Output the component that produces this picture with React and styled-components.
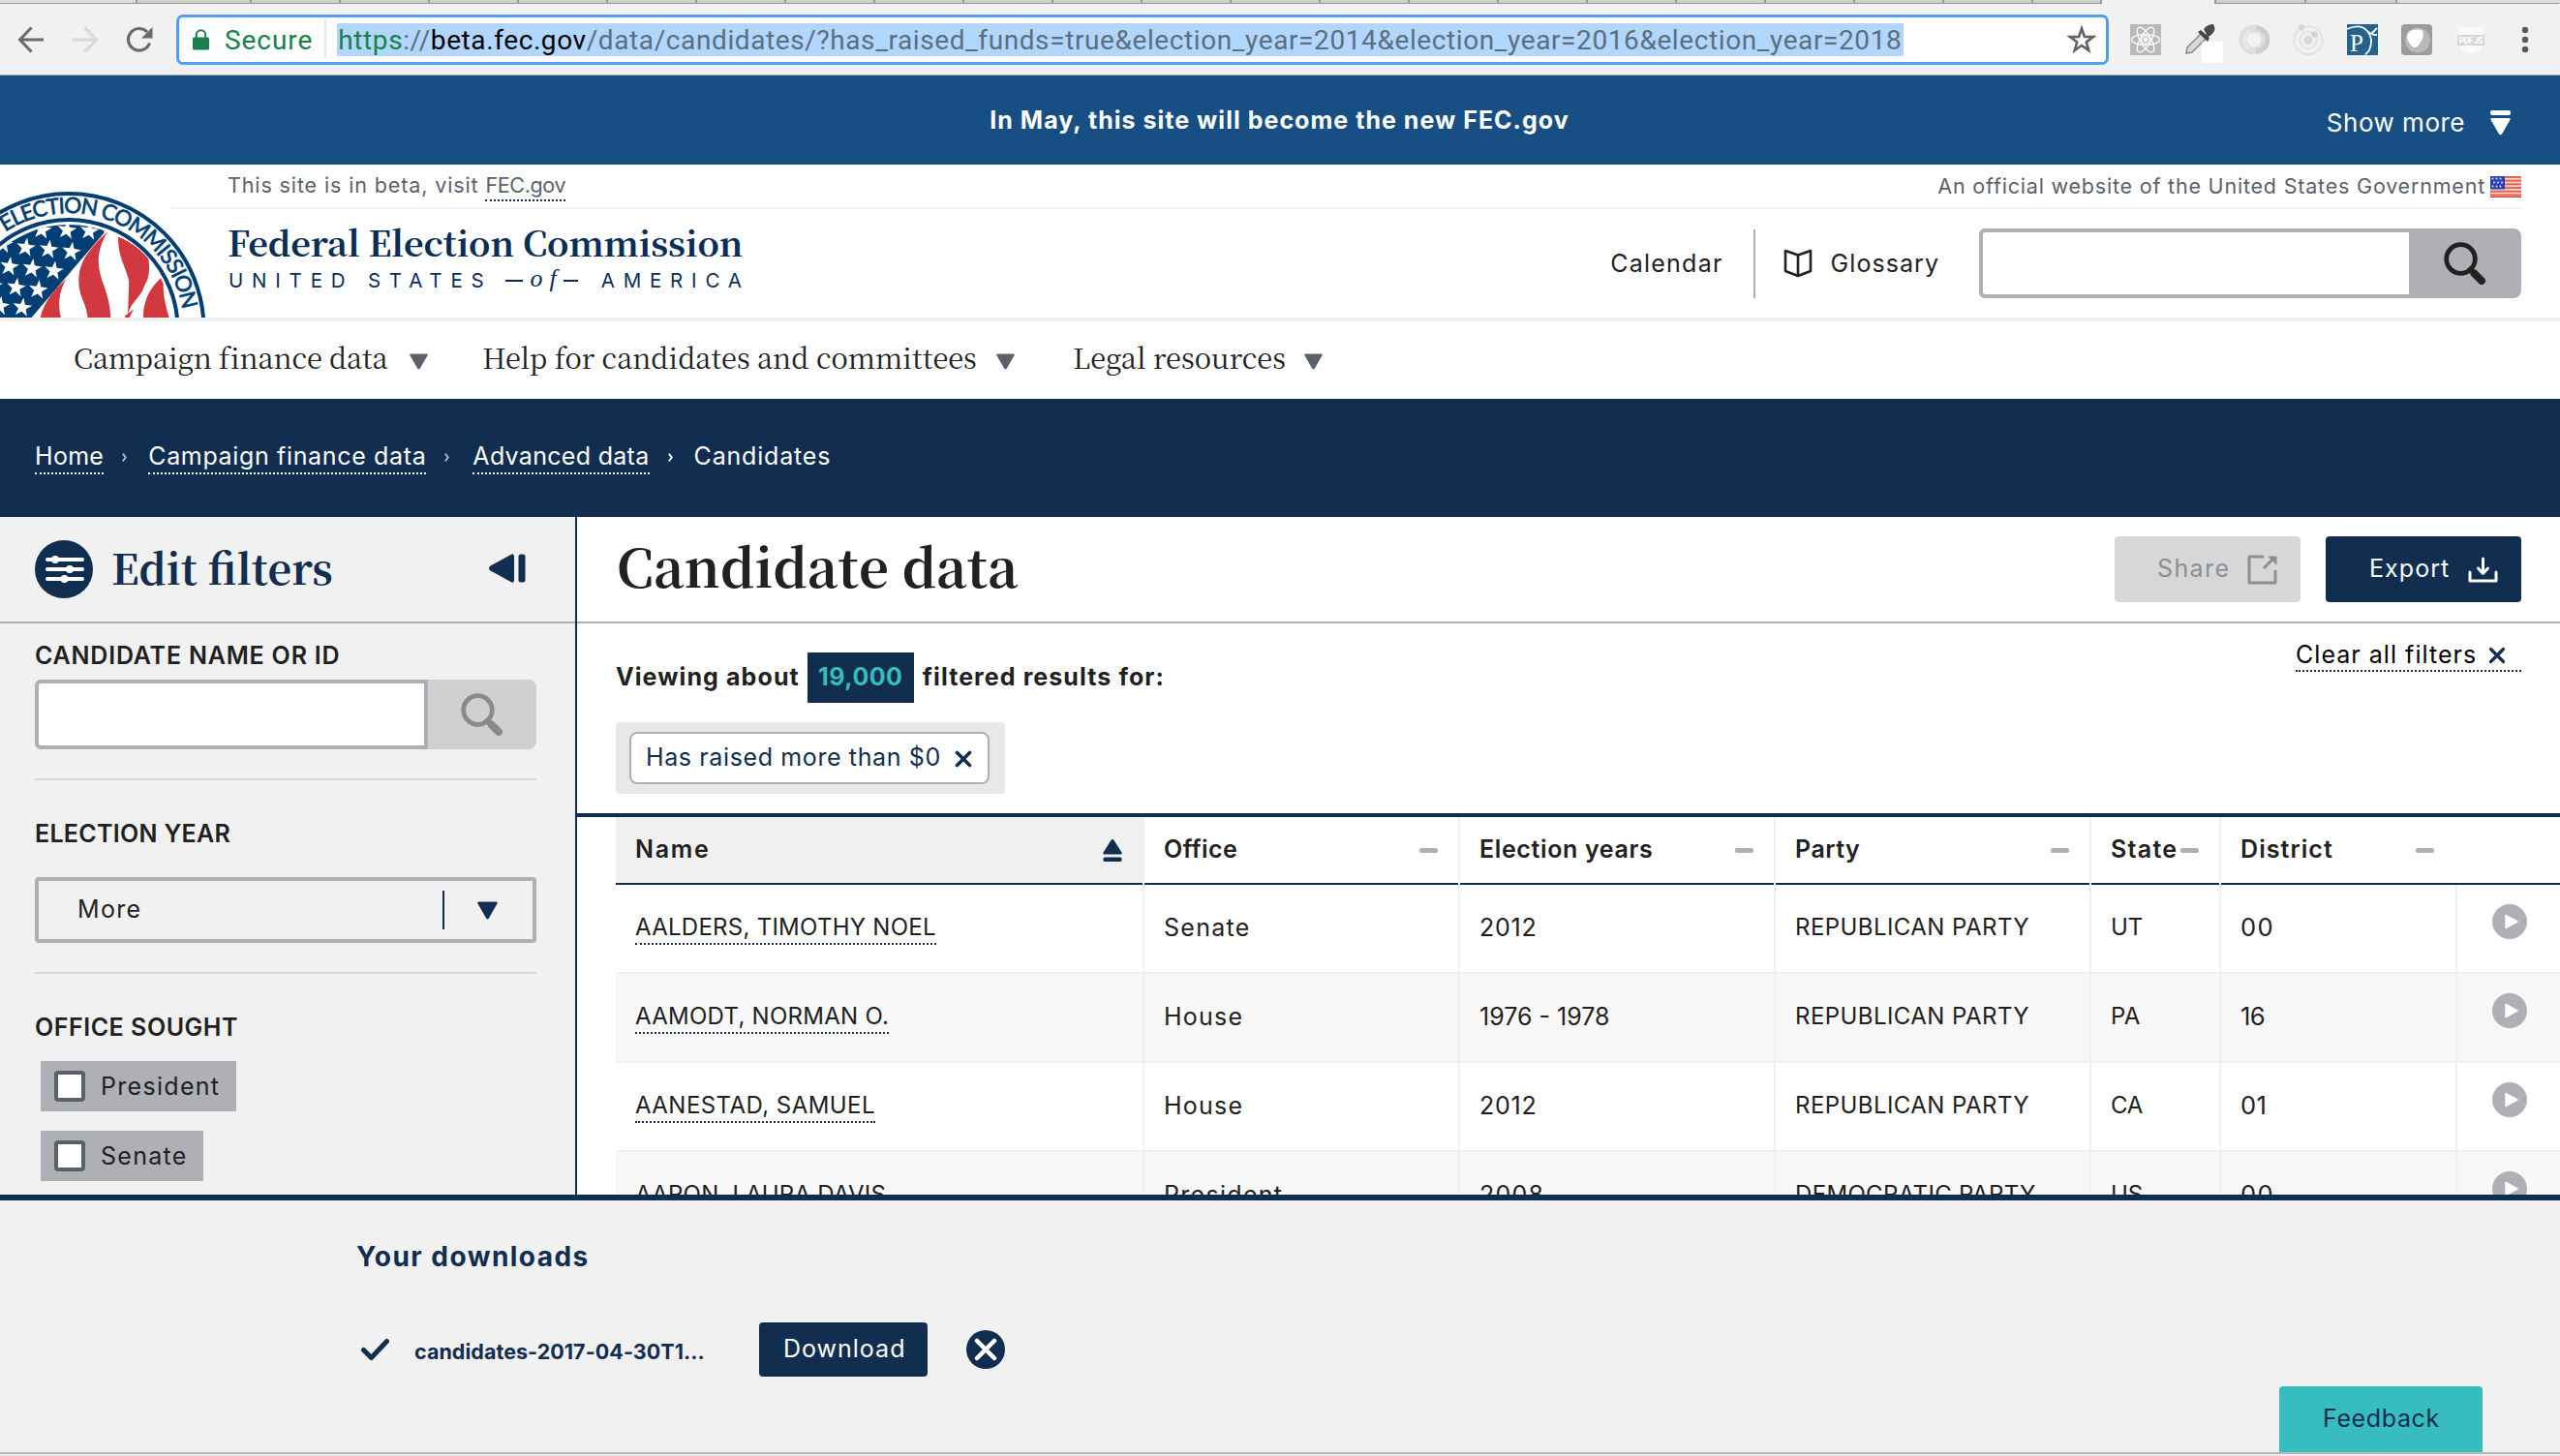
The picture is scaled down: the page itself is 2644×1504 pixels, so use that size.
import React from 'react';
import styled, { createGlobalStyle } from 'styled-components';

const sans = 'Inter, "Liberation Sans", sans-serif';
const serif = '"Noto Serif CJK SC", "Liberation Serif", serif';
const navy = '#112e51';
const ink = '#212121';
const gray = '#aeb0b5';
const pale = '#f1f1f1';

const GlobalStyle = createGlobalStyle`
  * { box-sizing: border-box; }
  body { margin: 0; background: #fff; }
`;

const Page = styled.div`
  width: 2644px;
  height: 1504px;
  display: flex;
  flex-direction: column;
  overflow: hidden;
  font-family: ${sans};
  font-size: 25px;
  line-height: 34px;
  color: ${ink};
  white-space: pre;
`;

const Spaced = styled.span`
  letter-spacing: ${p => p.$ls || 0}px;
`;

/* ---------- browser chrome ---------- */
const TabStrip = styled.div`
  display: flex;
  height: 4px;
  flex: none;
  background: #dadcdd;
`;
const Tab = styled.div`
  width: ${p => p.$w}px;
  flex: none;
  background: ${p => (p.$active ? '#f1f1f1' : p.$blank ? '#dadcdd' : '#cfcfcf')};
  border-bottom: ${p => (p.$active ? 'none' : '1px solid #95989a')};
  border-right: 2px solid ${p => (p.$last ? '#dadcdd' : '#98999b')};
`;
const Toolbar = styled.div`
  height: 74px;
  flex: none;
  display: flex;
  align-items: center;
  padding-left: 18px;
  background: #f1f1f1;
  border-bottom: 1px solid #a9a9aa;
`;
const NavButtons = styled.div`
  display: flex;
  gap: 28px;
  margin-right: 24px;
`;
const AddressBar = styled.div`
  width: 1996px;
  height: 52px;
  display: flex;
  align-items: center;
  padding: 0 10px 0 14px;
  background: #fff;
  border: 3px solid #4e9ff5;
  border-radius: 7px;
  font-family: Roboto, "Liberation Sans", sans-serif;
  font-size: 28px;
`;
const Secure = styled.span`
  margin-left: 16px;
  color: #188048;
  letter-spacing: 0.94px;
  padding-top: 2px;
`;
const Separator = styled.span`
  width: 2px;
  height: 39px;
  margin: 0 11px 0 12px;
  background: #e4e4e4;
`;
const Url = styled.span`
  height: 34px;
  padding: 2px 2px 0 1px;
  line-height: 32px;
  background: #b2d7fe;
  color: #5c6e80;
  letter-spacing: 0.6px;
  b { font-weight: 400; color: #188048; }
  i { font-style: normal; color: #000; }
`;
const StarSlot = styled.span`
  display: flex;
  margin-left: auto;
`;
const Extensions = styled.div`
  display: flex;
  align-items: center;
  gap: 24px;
  margin: 0 34px 0 22px;
`;

/* ---------- site header ---------- */
const Banner = styled.div`
  height: 92px;
  flex: none;
  display: grid;
  grid-template-columns: 1fr 600px 1fr;
  align-items: center;
  padding: 0 50px 0 49px;
  background: #174f84;
  color: #fff;
`;
const BannerText = styled.strong`
  grid-column: 2;
  text-align: center;
  font-weight: 700;
  letter-spacing: 1.02px;
`;
const ShowMore = styled.div`
  display: flex;
  justify-content: flex-end;
  align-items: center;
  gap: 26px;
  padding-top: 6px;
  font-size: 26px;
  letter-spacing: 0.5px;
`;
const SiteHeader = styled.header`
  height: 162px;
  flex: none;
  display: flex;
  background: #fff;
  border-bottom: 4px solid #f0f0f0;
`;
const LogoSlot = styled.div`
  width: 176px;
  svg { display: block; overflow: visible; }
`;
const HeaderBody = styled.div`
  flex: 1;
  margin-right: 40px;
`;
const Disclaimer = styled.div`
  height: 46px;
  display: flex;
  justify-content: space-between;
  padding: 7px 0 0 59px;
  border-bottom: 2px solid #f0f0f0;
  color: #5b616b;
  font-size: 21.5px;
  line-height: 29px;
`;
const DottedLink = styled.a`
  display: inline-block;
  border-bottom: 2px dotted ${p => p.$line || navy};
  letter-spacing: ${p => p.$ls || 0}px;
`;
const Official = styled.span`
  display: flex;
  gap: 5px;
  letter-spacing: 0.8px;
  line-height: 31px;
  svg { margin-top: 5px; }
`;
const TitleRow = styled.div`
  height: 112px;
  display: flex;
  justify-content: space-between;
  padding-left: 59px;
`;
const SiteTitle = styled.div`
  padding-top: 14px;
  color: #0a2d57;
`;
const SiteName = styled.div`
  font: 700 36px/40px ${serif};
  letter-spacing: -0.1px;
`;
const SiteSub = styled.div`
  display: flex;
  margin: 5px 0 0 1px;
  font-size: 20.5px;
  line-height: 30px;
  letter-spacing: 8.8px;
  i { font: italic 400 26px/26px "Liberation Serif", serif; letter-spacing: 7px; margin-left: 7px; }
`;
const Dash = styled.span`
  width: ${p => p.$w}px;
  height: 2px;
  margin: 14px ${p => p.$mr || 0}px 0 ${p => p.$ml || 0}px;
  background: #0a2d57;
`;
const Tools = styled.div`
  display: flex;
  align-items: center;
`;
const ToolText = styled.span`
  letter-spacing: ${p => p.$ls}px;
`;
const ToolDivider = styled.span`
  width: 2px;
  height: 71px;
  margin: 0 29px 0 31px;
  background: ${gray};
`;
const BookSlot = styled.span`
  display: flex;
  margin-right: 19px;
`;
const SearchBox = styled.div`
  width: ${p => p.$w}px;
  height: 72px;
  display: flex;
  margin-left: ${p => p.$ml || 0}px;
`;
const SearchInput = styled.div`
  flex: 1;
  background: #fff;
  border: 4px solid ${gray};
  border-right-width: ${p => (p.$open ? 0 : 4)}px;
  border-radius: 6px 0 0 6px;
`;
const SearchButton = styled.div`
  width: ${p => p.$w}px;
  display: flex;
  align-items: center;
  justify-content: center;
  background: ${p => p.$bg};
  border-radius: 0 8px 8px 0;
`;
const MainNav = styled.nav`
  height: 80px;
  flex: none;
  display: flex;
  align-items: flex-start;
  padding: 16px 0 0 76px;
  font: 400 29px/42px ${serif};
`;
const NavItem = styled.div`
  display: flex;
  width: ${p => p.$w}px;
  letter-spacing: ${p => p.$ls}px;
  svg { margin: 17px 0 0 ${p => p.$gap}px; }
`;
const Crumbs = styled.div`
  height: 122px;
  flex: none;
  display: flex;
  align-items: flex-start;
  padding: 42px 0 0 36px;
  background: ${navy};
  color: #fff;
`;
const CrumbMark = styled.span`
  display: flex;
  width: ${p => p.$w}px;
  padding-left: 19px;
  svg { margin: 14px 0 0; }
`;

/* ---------- workspace ---------- */
const Workspace = styled.div`
  flex: 1;
  min-height: 0;
  display: flex;
  overflow: hidden;
`;
const Sidebar = styled.aside`
  width: 596px;
  flex: none;
  background: ${pale};
  border-right: 2px solid ${navy};
`;
const SidebarHead = styled.div`
  height: 110px;
  display: flex;
  align-items: center;
  padding: 0 51px 0 36px;
  border-bottom: 2px solid ${gray};
  > svg:last-child { margin: 0 0 3px auto; }
`;
const SidebarTitle = styled.h2`
  margin: 0 0 5px 19px;
  font: 700 43px/60px ${serif};
  color: ${navy};
`;
const Filters = styled.div`
  padding: 18px 40px 0 36px;
`;
const FilterLabel = styled.div`
  font-weight: 600;
  line-height: 30px;
  letter-spacing: ${p => p.$ls}px;
`;
const FilterRule = styled.div`
  height: 2px;
  margin: 30px 0 40px;
  background: #d6d7d9;
`;
const Gap = styled.div`
  height: ${p => p.$h}px;
`;
const Select = styled.div`
  height: 68px;
  display: flex;
  align-items: center;
  padding: 0 36px 3px 40px;
  border: 4px solid ${gray};
  border-radius: 4px;
  letter-spacing: 1.3px;
  svg { margin: 3px 0 0 34px; }
`;
const SelectDivider = styled.span`
  width: 2px;
  height: 40px;
  margin: 3px 0 0 auto;
  background: ${navy};
`;
const CheckChip = styled.div`
  width: ${p => p.$w}px;
  height: 52px;
  display: flex;
  align-items: center;
  margin: 0 0 20px 6px;
  padding-left: 14px;
  background: ${gray};
  letter-spacing: 1.3px;
`;
const Box = styled.span`
  width: 32px;
  height: 32px;
  margin-right: 16px;
  background: #fff;
  border: 4px solid #5b616b;
  border-radius: 4px;
`;
const Main = styled.main`
  flex: 1;
  min-width: 0;
  background: #fff;
`;
const MainHead = styled.div`
  height: 110px;
  display: flex;
  align-items: center;
  gap: 26px;
  padding: 0 40px;
  border-bottom: 2px solid ${gray};
`;
const PageTitle = styled.h1`
  flex: 1;
  margin: 0 0 9px 1px;
  font: 700 54px/80px ${serif};
  letter-spacing: 0.15px;
`;
const ActionButton = styled.div`
  width: ${p => p.$w}px;
  height: 68px;
  display: flex;
  align-items: center;
  justify-content: space-between;
  padding: 0 24px 2px ${p => (p.$off ? 44 : 45)}px;
  border-radius: 4px;
  background: ${p => (p.$off ? '#d6d7d9' : navy)};
  color: ${p => (p.$off ? '#8d8e91' : '#fff')};
  letter-spacing: ${p => (p.$off ? 1.4 : 1.05)}px;
  svg { margin-top: 2px; }
`;
const Summary = styled.section`
  height: 200px;
  display: flex;
  justify-content: space-between;
  align-items: flex-start;
  padding: 0 40px;
  border-bottom: 4px solid ${navy};
`;
const Viewing = styled.div`
  display: flex;
  margin-top: 30px;
  font-weight: 700;
  line-height: 50px;
  letter-spacing: 1.09px;
`;
const Count = styled.span`
  width: 110px;
  height: 52px;
  margin: 0 9px 0 8px;
  text-align: center;
  background: ${navy};
  color: #36bdbb;
  letter-spacing: 0.48px;
`;
const TagWrap = styled.div`
  display: inline-flex;
  margin-top: 20px;
  padding: 10px 16px 10px 14px;
  background: #e8e8e8;
  border-radius: 4px;
`;
const Tag = styled.div`
  height: 54px;
  width: 372px;
  display: flex;
  align-items: center;
  justify-content: space-between;
  padding: 0 16px 3px 15px;
  background: #fff;
  border: 2px solid ${gray};
  border-radius: 8px;
  color: ${navy};
  letter-spacing: 0.62px;
  svg { margin-top: 5px; }
`;
const ClearAll = styled.a`
  width: 233px;
  display: flex;
  align-items: center;
  gap: 12px;
  margin-top: 17px;
  line-height: 31px;
  border-bottom: 2px dotted ${navy};
  color: #000;
  letter-spacing: 1.03px;
`;

/* ---------- table ---------- */
const columns = '546px 326px 326px 326px 134px 244px 1fr';
const Table = styled.div`
  margin-left: 40px;
`;
const HeadRow = styled.div`
  display: grid;
  grid-template-columns: ${columns};
  height: 70px;
`;
const HeadCell = styled.div`
  display: flex;
  align-items: center;
  justify-content: space-between;
  padding: 0 ${p => p.$pr || 21}px 2px 20px;
  font-weight: 600;
  letter-spacing: ${p => p.$ls}px;
  border-bottom: 2px solid ${navy};
  background: ${p => (p.$active ? '#f0f0f0' : '#fff')};
  svg { flex: none; margin-top: 3px; }
`;
const HeadSplit = styled.div`
  display: grid;
  border-right: ${p => (p.$open ? 0 : 2)}px solid #f0f0f0;
`;
const Row = styled.div`
  display: grid;
  grid-template-columns: ${columns};
  height: 92px;
  background: ${p => (p.$alt ? '#f8f8f8' : '#fff')};
  border-bottom: 2px solid #f0f0f0;
`;
const Cell = styled.div`
  padding: 27px 0 0 20px;
  font-size: ${p => p.$size}px;
  letter-spacing: ${p => p.$ls}px;
  border-right: 2px solid #f0f0f0;
  a { line-height: 33px; }
`;
const PlayCell = styled.div`
  padding: 20px 0 0 36px;
`;

/* ---------- downloads ---------- */
const Downloads = styled.section`
  height: 266px;
  flex: none;
  display: flex;
  justify-content: space-between;
  padding: 0 80px 0 368px;
  background: ${pale};
  border-top: 6px solid ${navy};
`;
const DownloadsTitle = styled.h3`
  margin: 40px 0 50px;
  font-size: 28px;
  line-height: 36px;
  font-weight: 700;
  letter-spacing: 1.45px;
  color: ${navy};
`;
const DownloadRow = styled.div`
  display: flex;
  align-items: center;
  color: ${navy};
`;
const FileName = styled.strong`
  width: 356px;
  margin: 4px 0 0 26px;
  font-size: 21.5px;
  font-weight: 700;
  letter-spacing: 0.04px;
`;
const DownloadButton = styled.div`
  width: 174px;
  height: 56px;
  padding: 0 0 0 25px;
  line-height: 54px;
  margin-right: 40px;
  border-radius: 4px;
  background: ${navy};
  color: #fff;
  letter-spacing: 1px;
`;
const Feedback = styled.div`
  align-self: flex-end;
  width: 210px;
  height: 68px;
  padding-left: 45px;
  line-height: 66px;
  background: #37bdbd;
  border-radius: 4px 4px 0 0;
  color: ${navy};
  letter-spacing: 0.63px;
`;
const StatusLine = styled.div`
  height: 4px;
  flex: none;
  background: #ebebeb;
  border-top: 2px solid #b9b9ba;
`;

/* ---------- icons ---------- */
const Caret = ({ w = 19, h = 17, color = '#5b616b' }) => (
  <svg width={w} height={h} viewBox="0 0 20 17">
    <path d="M1.5 0h17q1.8 0 1 1.8L11.3 16q-1.3 1.6-2.6 0L.5 1.8Q-.3 0 1.5 0z" fill={color} />
  </svg>
);
const Cross = ({ size = 18, color = navy, sw = 3.6 }) => (
  <svg width={size} height={size} viewBox="0 0 18 18">
    <path d="M2.5 2.5l13 13M15.5 2.5l-13 13" stroke={color} strokeWidth={sw} strokeLinecap="round" />
  </svg>
);
const Minus = () => (
  <svg width="19" height="5"><rect width="19" height="5" rx="2" fill={gray} /></svg>
);
const SortUp = () => (
  <svg width="20" height="24" viewBox="0 0 20 24">
    <path d="M10 0q1 0 1.7 1.2L19.5 13.5q.8 2-1 2h-17q-1.800 0-1-2L8.300 1.200Q9 0 10 0z" fill={navy} />
    <rect x=".5" y="18.500" width="19" height="4.500" rx="1.500" fill={navy} />
  </svg>
);
const Search = ({ color }) => (
  <svg width="44" height="44" viewBox="0 0 44 44" fill="none" stroke={color} strokeLinecap="round">
    <circle cx="17.5" cy="17.5" r="14.8" strokeWidth="4.8" />
    <path d="M27.5 28.5l4 4" strokeWidth="6" />
    <path d="M31.5 32.5l7.500 7.500" strokeWidth="8" />
  </svg>
);
const Play = () => (
  <svg width="36" height="36" viewBox="0 0 36 36">
    <circle cx="18" cy="18" r="18" fill={gray} />
    <path d="M14 11.5v13l12-6.5z" fill="#fff" stroke="#fff" strokeWidth="1.5" strokeLinejoin="round" />
  </svg>
);
const Chevron = ({ color }) => (
  <svg width="5" height="9" viewBox="0 0 5 9" fill="none" stroke={color} strokeWidth="1.8"><path d="M.8.6l3 3.9-3 3.9" /></svg>
);

const starPoints = (cx, cy, r, rot) =>
  Array.from({ length: 10 }, (_, i) => {
    const a = ((i * 36 - 90 + rot) * Math.PI) / 180;
    const k = i % 2 ? r * 0.4 : r;
    return `${(cx + k * Math.cos(a)).toFixed(1)},${(cy + k * Math.sin(a)).toFixed(1)}`;
  }).join(' ');
const stars = [
  [130, 172], [207, 173], [277, 176], [10, 216], [80, 227], [151, 233], [221, 240],
  [29, 286], [99, 292], [167, 299], [-22, 344], [50, 351], [118, 358], [0, 408], [69, 413],
];
const Seal = () => (
  <svg width="216" height="158" viewBox="0 0 216 158">
    <defs>
      <clipPath id="frame"><rect width="216" height="158" /></clipPath>
      <clipPath id="field"><circle cx="213" cy="478" r="322" /></clipPath>
      <path id="arc" d="M5.5 69.7A119 119 0 0 1 190 166" />
    </defs>
    <g clipPath="url(#frame)">
      <circle cx="71" cy="169.5" r="139.5" fill="#fff" stroke="#003e73" strokeWidth="4" />
      <circle cx="71" cy="169.5" r="112.5" fill="#fff" stroke="#003e73" strokeWidth="4" />
      <g transform="translate(0 10) scale(.33333)">
        <g clipPath="url(#field)">
          <path d="M-10 100H330L322 182 96 446H-10z" fill="#003e73" />
          {stars.map(([x, y]) => <polygon key={`${x}-${y}`} points={starPoints(x, y, 31, 8)} fill="#fff" />)}
        </g>
        <g fill="#d1383f">
          <path d="M125 446C133 400 170 355 205 325 184 362 178 400 189 446z" />
          <path d="M333 178C298 240 298 282 322 345 336 385 342 412 343 446H272C266 392 245 384 244 330 243 262 292 218 333 178z" />
          <path d="M366 194C402 206 436 234 460 262 465 300 462 322 447 346 425 376 408 394 396 436 403 400 406 370 400 332 390 288 365 256 366 194z" />
          <path d="M396 436C400 400 440 380 447 346L400 332z" />
          <path d="M386 440L414 418 400 446H390z" />
          <path d="M498 322L506 338C505 376 514 412 525 446H444C444 400 456 362 498 322z" />
        </g>
      </g>
      <text fontFamily="Lato, sans-serif" fontSize="22.5" fill="#003e73" stroke="#003e73" strokeWidth=".7">
        <textPath href="#arc" textLength="237" lengthAdjust="spacing">ELECTION COMMISSION</textPath>
      </text>
    </g>
  </svg>
);

const Flag = () => (
  <svg width="32" height="22" viewBox="0 0 32 22">
    <rect width="32" height="22" fill="#f8d5cd" />
    {[0, 3.7, 7.4, 11.1, 14.8, 18.5].map(y => <rect key={y} y={y} width="32" height="1.9" fill="#e5604a" />)}
    <rect y="20.8" width="32" height="1.2" fill="#cf3c2c" />
    <rect width="15" height="13.5" fill="#2a3fb8" />
    {[2.5, 6.5, 10.5].map(y => [2.5, 6.5, 10.5].map(x => <circle key={`${x}-${y}`} cx={x + (y === 6.5 ? 1.5 : 0)} cy={y} r="1" fill="#dfe3fa" />))}
  </svg>
);

const ReactExt = () => (
  <svg width="32" height="32" viewBox="0 0 32 32">
    <rect width="32" height="32" fill="#b9b9b9" />
    <g fill="none" stroke="#fff" strokeWidth="1.3">
      {[0, 60, 120].map(a => <ellipse key={a} cx="16" cy="16" rx="14.5" ry="5.6" transform={`rotate(${a} 16 16)`} />)}
      <circle cx="16" cy="16" r="4.2" />
    </g>
    <circle cx="16" cy="16" r="2.4" fill="#fff" />
  </svg>
);
const DropperExt = () => (
  <svg width="32" height="32" viewBox="0 0 32 32" overflow="visible">
    <path d="M3 24L17 10l5 5L8 29l-6 1z" fill="#d8d8d8" stroke="#8a8a8a" strokeWidth="1.5" />
    <path d="M14 8l3-2 9 8-2 4z" fill="#444" />
    <path d="M20 5Q24 0 30 0q2 3 1 7-3 5-7 6z" fill="#4a4a4a" />
    <rect x="18" y="18" width="22" height="22" rx="2" fill="#fff" />
  </svg>
);
const RingExt = () => (
  <svg width="32" height="32" viewBox="0 0 32 32" fill="none">
    <circle cx="16" cy="16" r="11.5" stroke="#dedede" strokeWidth="8" />
    <path d="M18 4a12 12 0 0 1 0 24" stroke="#cdcdcd" strokeWidth="5" />
    <path d="M12 6a12 12 0 0 0-1 20" stroke="#e9e9e9" strokeWidth="3" />
  </svg>
);
const OrbitExt = () => (
  <svg width="32" height="32" viewBox="0 0 32 32" fill="none" stroke="#e0e0e0" strokeWidth="1.8">
    <circle cx="16" cy="16.5" r="14.5" />
    <circle cx="16" cy="16.5" r="8.8" />
    <circle cx="16" cy="16.5" r="4.5" fill="#dadada" stroke="none" />
    <circle cx="9" cy="3.5" r="3.2" fill="#d6d6d6" stroke="none" />
    <circle cx="22.5" cy="10.5" r="3.2" fill="#d2d2d2" stroke="none" />
  </svg>
);
const PExt = () => (
  <svg width="32" height="32" viewBox="0 0 32 32" overflow="visible">
    <rect width="32" height="32" fill="#23638d" />
    <path d="M0 5Q14-1 21 7t2 20l-4 4.500M22 8l6 3h3M26 9l5-5" fill="none" stroke="#fff" strokeWidth="1.8" />
    <text x="3" y="27.5" fontFamily="Liberation Serif, serif" fontSize="25" fill="#fff">P</text>
  </svg>
);
const ShieldExt = () => (
  <svg width="32" height="32" viewBox="0 0 32 32">
    <rect width="32" height="32" rx="4" fill="#9b9b9b" />
    <circle cx="17" cy="16.5" r="13" fill="#b9b9b9" />
    <path d="M10 6.500q7-2 12 0 2 6-2 12-3 5.500-6 5.500-3 0-6-5-2.500-4-2-7 1-4 4-5.500z" fill="#fff" />
  </svg>
);
const PdfExt = () => (
  <svg width="32" height="32" viewBox="0 0 32 32">
    <path d="M3 2q13 2 26 0l-3 26-10 3-10-3z" fill="#fafafa" />
    <rect x="2" y="11" width="28" height="11" fill="#d6d6d6" />
    <text x="3.5" y="20" fontFamily="Roboto, sans-serif" fontWeight="700" fontSize="9" textLength="25" fill="#fff">PDF JS</text>
  </svg>
);

/* ---------- data ---------- */
const tabWidths = [118, ...Array(20).fill(92), 71];
const headers = [
  ['Name', 1.7], ['Office', 0.43], ['Election years', 0.63], ['Party', 0.5], ['State', 1.3], ['District', 1.08],
];
const sizes = [24, 25, 25, 24, 24, 25.5];
const rows = [
  [['AALDERS, TIMOTHY NOEL', 0.26], ['Senate', 1.26], ['2012', 0.8], ['REPUBLICAN PARTY', 0.44], ['UT', 0], ['00', 1.5]],
  [['AAMODT, NORMAN O.', 0.27], ['House', 1.25], ['1976 - 1978', 0], ['REPUBLICAN PARTY', 0.44], ['PA', 0.2], ['16', -0.5]],
  [['AANESTAD, SAMUEL', 0.45], ['House', 1.25], ['2012', 0.8], ['REPUBLICAN PARTY', 0.44], ['CA', -0.4], ['01', 0.5]],
  [['AARON, LAURA DAVIS', 0.22], ['President', 1.3], ['2008', 1.2], ['DEMOCRATIC PARTY', 0.33], ['US', 0], ['00', 1.5]],
];

const Chrome = () => (
  <>
    <TabStrip>
      <Tab $w={142} $blank />
      {tabWidths.map((w, i) => <Tab key={i} $w={w} />)}
      <Tab $w={118} $active />
      <Tab $w={93} /><Tab $w={94} />
      <Tab $w={168} $blank $last />
    </TabStrip>
    <Toolbar>
      <NavButtons>
        <svg width="28" height="28" viewBox="0 0 28 28" fill="none" stroke="#6b6b6b" strokeWidth="3"><path d="M27 14H3M14.5 1.5L2.5 14l12 12.5" /></svg>
        <svg width="28" height="28" viewBox="0 0 28 28" fill="none" stroke="#d8d8d8" strokeWidth="3"><path d="M1 14h24M13.5 1.5l12 12.5-12 12.5" /></svg>
        <svg width="28" height="28" viewBox="0 0 28 28"><path d="M24.5 17.5A11.3 11.3 0 1 1 22 6" fill="none" stroke="#6b6b6b" strokeWidth="3.2" /><path d="M27.5 1v11.5H16z" fill="#6b6b6b" /></svg>
      </NavButtons>
      <AddressBar>
        <svg width="17" height="22" viewBox="0 0 17 22"><rect y="8.5" width="17" height="13" rx="1.5" fill="#188048" /><path d="M3.8 9V6a4.7 4.7 0 0 1 9.4 0v3" fill="none" stroke="#188048" strokeWidth="2" /></svg>
        <Secure>Secure</Secure>
        <Separator />
        <Url><b>https</b>://<i>beta.fec.gov</i>/data/candidates/?has_raised_funds=true&amp;election_year=2014&amp;election_year=2016&amp;election_year=2018</Url>
        <StarSlot>
          <svg width="30" height="30" viewBox="0 0 30 30"><polygon points={starPoints(15, 16, 12.5, 0)} fill="none" stroke="#5f6164" strokeWidth="2.6" /></svg>
        </StarSlot>
      </AddressBar>
      <Extensions>
        <ReactExt /><DropperExt /><RingExt /><OrbitExt /><PExt /><ShieldExt /><PdfExt />
      </Extensions>
      <svg width="12" height="32" viewBox="0 0 12 32" fill="#5a5a5a"><circle cx="6" cy="6" r="3.2" /><circle cx="6" cy="16" r="3.2" /><circle cx="6" cy="26" r="3.2" /></svg>
    </Toolbar>
  </>
);

const Header = () => (
  <>
    <Banner>
      <BannerText>In May, this site will become the new FEC.gov</BannerText>
      <ShowMore>
        Show more
        <svg width="22" height="26" viewBox="0 0 22 26" fill="#fff"><rect width="21" height="5" rx="2" /><path d="M2 8h17q2.5 0 1.3 2L12 24.5q-1.5 1.5-3 0L.7 10Q-.5 8 2 8z" /></svg>
      </ShowMore>
    </Banner>
    <SiteHeader>
      <LogoSlot><Seal /></LogoSlot>
      <HeaderBody>
        <Disclaimer>
          <span><Spaced $ls={0.88}>This site is in beta, visit </Spaced><DottedLink $ls={-0.36}>FEC.gov</DottedLink></span>
          <Official>An official website of the United States Government<Flag /></Official>
        </Disclaimer>
        <TitleRow>
          <SiteTitle>
            <SiteName>Federal Election Commission</SiteName>
            <SiteSub>UNITED STATES<Dash $w={18} $ml={14} /><i>of</i><Dash $w={15} $mr={24} />AMERICA</SiteSub>
          </SiteTitle>
          <Tools>
            <ToolText $ls={1.25}>Calendar</ToolText>
            <ToolDivider />
            <BookSlot>
              <svg width="30" height="30" viewBox="0 0 30 30" fill="none" stroke={ink} strokeWidth="2.6" strokeLinejoin="round"><path d="M15 6.5L2 2v21l13 5 13-5V2z M15 6.5V28" /></svg>
            </BookSlot>
            <ToolText $ls={1.05}>Glossary</ToolText>
            <SearchBox $w={560} $ml={41}>
              <SearchInput $open />
              <SearchButton $w={116} $bg={gray}><Search color={ink} /></SearchButton>
            </SearchBox>
          </Tools>
        </TitleRow>
      </HeaderBody>
    </SiteHeader>
    <MainNav>
      <NavItem $w={422} $ls={-0.12} $gap={22}>Campaign finance data<Caret /></NavItem>
      <NavItem $w={610} $ls={0} $gap={20}>Help for candidates and committees<Caret /></NavItem>
      <NavItem $w={300} $ls={0} $gap={19}>Legal resources<Caret /></NavItem>
    </MainNav>
    <Crumbs>
      <DottedLink $line="#fff" $ls={0.3}>Home</DottedLink>
      <CrumbMark $w={46}><Chevron color="#aeb9c6" /></CrumbMark>
      <DottedLink $line="#fff" $ls={0.65}>Campaign finance data</DottedLink>
      <CrumbMark $w={48}><Chevron color="#aeb9c6" /></CrumbMark>
      <DottedLink $line="#fff" $ls={0.3}>Advanced data</DottedLink>
      <CrumbMark $w={46}><Chevron color="#fff" /></CrumbMark>
      <Spaced $ls={0.82}>Candidates</Spaced>
    </Crumbs>
  </>
);

const FilterPanel = () => (
  <Sidebar>
    <SidebarHead>
      <svg width="60" height="60" viewBox="0 0 60 60">
        <circle cx="30" cy="30" r="30" fill={navy} />
        <g stroke="#fff" strokeWidth="4" strokeLinecap="round"><path d="M13 20h36M13 30h36M13 40h36" /></g>
        <g fill="#fff"><circle cx="21" cy="20" r="4" /><circle cx="36" cy="30" r="4" /><circle cx="30.5" cy="40" r="4" /></g>
      </svg>
      <SidebarTitle>Edit filters</SidebarTitle>
      <svg width="38" height="30" viewBox="0 0 38 30" fill={navy}><path d="M1 12.8L22.5 1q3.5-2 3.5 2v24q0 4-3.5 2L1 17.2q-2-2.2 0-4.4z" /><rect x="30.5" y=".5" width="7" height="29" rx="2.5" /></svg>
    </SidebarHead>
    <Filters>
      <FilterLabel $ls={0.8}>CANDIDATE NAME OR ID</FilterLabel>
      <Gap $h={10} />
      <SearchBox $w={518}>
        <SearchInput />
        <SearchButton $w={112} $bg="#cfd0d2"><Search color="#8a8a8a" /></SearchButton>
      </SearchBox>
      <FilterRule />
      <FilterLabel $ls={0.3}>ELECTION YEAR</FilterLabel>
      <Gap $h={30} />
      <Select>More<SelectDivider /><Caret w={21} h={19} color={navy} /></Select>
      <FilterRule />
      <FilterLabel $ls={0.53}>OFFICE SOUGHT</FilterLabel>
      <Gap $h={20} />
      <CheckChip $w={202}><Box />President</CheckChip>
      <CheckChip $w={168}><Box />Senate</CheckChip>
    </Filters>
  </Sidebar>
);

const Results = () => (
  <Main>
    <MainHead>
      <PageTitle>Candidate data</PageTitle>
      <ActionButton $w={192} $off>
        Share
        <svg width="31" height="31" viewBox="0 0 31 31" fill="none" stroke="#8d8e91" strokeWidth="3" strokeLinejoin="round"><path d="M17 2H2v27h27V16M17 14L27 4" /><path d="M21 1.500h9.500V11z" fill="#8d8e91" stroke="none" /></svg>
      </ActionButton>
      <ActionButton $w={202}>
        Export
        <svg width="31" height="27" viewBox="0 0 31 27" fill="none" stroke="#fff" strokeWidth="3" strokeLinecap="round" strokeLinejoin="round"><path d="M2 16v9h27v-9M15.5 2v15M10.500 12l5 5.500 5-5.500" /></svg>
      </ActionButton>
    </MainHead>
    <Summary>
      <div>
        <Viewing>Viewing about<Count>19,000</Count>filtered results for:</Viewing>
        <TagWrap><Tag>Has raised more than $0<Cross /></Tag></TagWrap>
      </div>
      <ClearAll>Clear all filters<Cross sw={3.2} /></ClearAll>
    </Summary>
    <Table>
      <HeadRow>
        {headers.map(([label, ls], i) => (
          <HeadSplit key={label} $open={i === 5}>
            <HeadCell $active={i === 0} $ls={ls} $pr={i === 5 ? 24 : 21}>
              {label}{i === 0 ? <SortUp /> : <Minus />}
            </HeadCell>
          </HeadSplit>
        ))}
        <HeadCell />
      </HeadRow>
      {rows.map((row, r) => (
        <Row key={r} $alt={r % 2 === 1}>
          {row.map(([text, ls], c) => (
            <Cell key={c} $size={sizes[c]} $ls={c ? ls : 0}>{c ? text : <DottedLink $ls={ls}>{text}</DottedLink>}</Cell>
          ))}
          <PlayCell><Play /></PlayCell>
        </Row>
      ))}
    </Table>
  </Main>
);

export default function App() {
  return (
    <Page>
      <GlobalStyle />
      <Chrome />
      <Header />
      <Workspace>
        <FilterPanel />
        <Results />
      </Workspace>
      <Downloads>
        <div>
          <DownloadsTitle>Your downloads</DownloadsTitle>
          <DownloadRow>
            <svg width="34" height="24" viewBox="0 0 34 24" fill="none" stroke={navy} strokeWidth="5" strokeLinecap="round" strokeLinejoin="round"><path d="M7.5 12.5l8 8L31.5 3.5" /></svg>
            <FileName>candidates-2017-04-30T1...</FileName>
            <DownloadButton>Download</DownloadButton>
            <svg width="40" height="40" viewBox="0 0 40 40"><circle cx="20" cy="20" r="20" fill={navy} /><path d="M11 11l18 18M29 11L11 29" stroke="#fff" strokeWidth="4.5" strokeLinecap="round" /></svg>
          </DownloadRow>
        </div>
        <Feedback>Feedback</Feedback>
      </Downloads>
      <StatusLine />
    </Page>
  );
}
